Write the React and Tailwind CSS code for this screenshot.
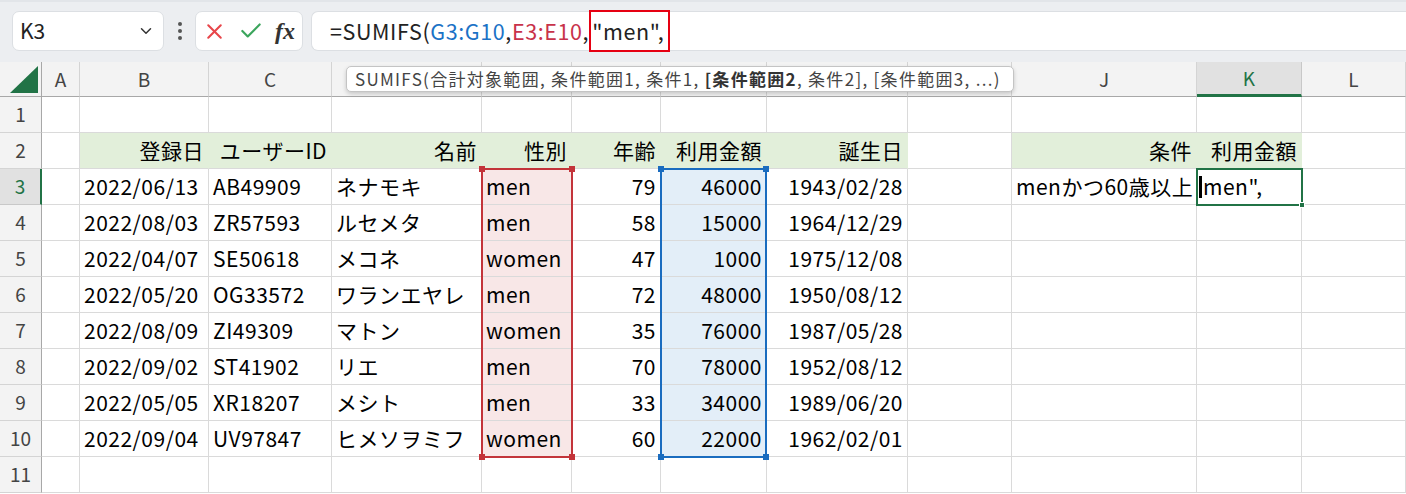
import { X, Check, ChevronDown } from "lucide-react";

const FONT = { fontFamily: '"Noto Sans CJK JP", "Noto Sans", sans-serif' };

const colLetters = ["A", "B", "C", "D", "E", "F", "G", "H", "I", "J", "K", "L"];

const data = [
    ["2022/06/13", "AB49909", "ネナモキ", "men", "79", "46000", "1943/02/28"],
    ["2022/08/03", "ZR57593", "ルセメタ", "men", "58", "15000", "1964/12/29"],
    ["2022/04/07", "SE50618", "メコネ", "women", "47", "1000", "1975/12/08"],
    ["2022/05/20", "OG33572", "ワランエヤレ", "men", "72", "48000", "1950/08/12"],
    ["2022/08/09", "ZI49309", "マトン", "women", "35", "76000", "1987/05/28"],
    ["2022/09/02", "ST41902", "リエ", "men", "70", "78000", "1952/08/12"],
    ["2022/05/05", "XR18207", "メシト", "men", "33", "34000", "1989/06/20"],
    ["2022/09/04", "UV97847", "ヒメソヲミフ", "women", "60", "22000", "1962/02/01"],
];

const headers = ["登録日", "ユーザーID", "名前", "性別", "年齢", "利用金額", "誕生日"];

// alignment of the data columns B..H
const dataAlign = ["left", "left", "left", "left", "right", "right", "right"];

function Cell({ text, align = "left", fill, children }) {
    let bg = "bg-white border-r-[#dadada]";
    if (fill === "green") bg = "bg-[#e2efda] border-r-[#e2efda]";
    if (fill === "red") bg = "bg-[#f8e7e7] border-r-[#dadada]";
    if (fill === "blue") bg = "bg-[#e3eef8] border-r-[#dadada]";
    return (
        <div
            className={`flex items-center border-r border-b border-b-[#dadada] text-[21px] tracking-[0.5px] text-black whitespace-nowrap overflow-visible ${bg} ${
                align === "right" ? "justify-end pr-[4px]" : "justify-start pl-[4px]"
            }`}
        >
            {children ?? text}
        </div>
    );
}

function RowHeader({ n, active }) {
    return (
        <div
            className={`flex items-center justify-center border-b text-[19px] ${
                active
                    ? "bg-[#e1e1e1] text-[#217346] border-r-2 border-r-[#217346] border-b-[#c8c8c8]"
                    : "bg-[#f3f3f3] text-[#444] border-r border-r-[#a8a8a8] border-b-[#d4d4d4]"
            }`}
        >
            {n}
        </div>
    );
}

function ColHeader({ l, active }) {
    return (
        <div
            className={`flex items-center justify-center border-r text-[19px] ${
                active
                    ? "bg-[#e1e1e1] text-[#217346] border-b-[3px] border-b-[#217346] border-r-[#c8c8c8]"
                    : "bg-[#f3f3f3] text-[#444] border-b border-b-[#a8a8a8] border-r-[#d4d4d4]"
            }`}
        >
            {l}
        </div>
    );
}

function Toolbar() {
    return (
        <div className="h-[62px] bg-[#eceef1] border-t-2 border-t-[#e2e5e9] flex items-start pt-[9px] pl-[12px] gap-0">
            <div className="w-[152px] h-[40px] bg-white rounded-[7px] border border-[#dcdfe3] flex items-center justify-between pl-[7px] pr-[8px]">
                <span className="text-[21px] text-[#222]" style={FONT}>K3</span>
                <ChevronDown size={18} strokeWidth={2} className="text-[#333]" />
            </div>
            <div className="w-[31px] h-[40px] flex flex-col items-center justify-center gap-[3px]">
                <div className="w-[4px] h-[4px] rounded-full bg-[#555]" />
                <div className="w-[4px] h-[4px] rounded-full bg-[#555]" />
                <div className="w-[4px] h-[4px] rounded-full bg-[#555]" />
            </div>
            <div className="w-[108px] h-[40px] bg-white rounded-[7px] border border-[#dcdfe3] flex items-center pl-[6px] gap-[11px]">
                <X size={25} strokeWidth={2} className="text-[#e8464a]" />
                <Check size={26} strokeWidth={2} className="text-[#3ba55c]" />
                <span className="text-[24px] font-bold italic text-[#333] leading-none" style={{ fontFamily: '"Liberation Serif", "DejaVu Serif", serif' }}>
                    fx
                </span>
            </div>
            <div className="ml-[8px] flex-1 h-[40px] bg-white rounded-l-[7px] border border-r-0 border-[#dcdfe3] flex items-center pl-[18px] text-[21.5px] tracking-[0.6px] text-[#222]" style={FONT}>
                <span>=SUMIFS(</span>
                <span className="text-[#1b72c6]">G3:G10</span>
                <span>,</span>
                <span className="text-[#c8324a]">E3:E10</span>
                <span>,</span>
                <span className="h-[42px] border-2 border-[#e60012] flex items-center pl-[1px] pr-[4px]">"men",</span>
            </div>
        </div>
    );
}

function Sheet() {
    const rows = [];
    for (let r = 1; r <= 11; r++) {
        const cells = [];
        for (let c = 0; c < 12; c++) {
            const key = `${r}-${c}`;
            let text = "";
            let align = "left";
            let fill;
            if (r === 2) {
                if (c >= 1 && c <= 7) {
                    text = headers[c - 1];
                    align = "right";
                    fill = "green";
                }
                if (c === 9) { text = "条件"; align = "right"; fill = "green"; }
                if (c === 10) { text = "利用金額"; align = "right"; fill = "green"; }
            } else if (r >= 3 && r <= 10) {
                if (c >= 1 && c <= 7) {
                    text = data[r - 3][c - 1];
                    align = dataAlign[c - 1];
                }
                if (c === 4) fill = "red";
                if (c === 6) fill = "blue";
                if (r === 3 && c === 9) text = "menかつ60歳以上";
            }
            if (r === 3 && c === 10) {
                cells.push(
                    <Cell key={key}>
                        <span className="flex items-center">
                            <span className="w-[3px] h-[22px] bg-black mr-[1px] -ml-[2px]" />
                            men",
                        </span>
                    </Cell>
                );
                continue;
            }
            cells.push(<Cell key={key} text={text} align={align} fill={fill} />);
        }
        rows.push(
            <div key={r} className="contents">
                <RowHeader n={r} active={r === 3} />
                {cells}
            </div>
        );
    }

    return (
        <div className="relative" style={FONT}>
            <div className="grid grid-cols-[42px_38px_129px_123px_150px_90px_89px_106px_141px_104px_185px_105px_104px] grid-rows-[35px_repeat(11,36px)]">
                <div className="bg-[#f3f3f3] border-r border-b border-[#a8a8a8] flex items-end justify-end pr-[3px] pb-[3px]">
                    <svg width="28" height="27" viewBox="0 0 28 27">
                        <polygon points="28,0 28,27 0,27" fill="#217346" />
                    </svg>
                </div>
                {colLetters.map((l) => (
                    <ColHeader key={l} l={l} active={l === "K"} />
                ))}
                {rows}
            </div>

            {/* formula tooltip */}
            <div className="absolute left-[346px] top-[4px] w-[668px] h-[26px] bg-white border border-[#c4c4c4] rounded-[5px] shadow-[0_2px_4px_rgba(0,0,0,0.18)] flex items-center pl-[8px] text-[17px] tracking-[1.3px] text-[#444] whitespace-nowrap overflow-hidden">
                <span>
                    SUMIFS(合計対象範囲, 条件範囲1, 条件1, <b className="font-bold text-[#333]">[条件範囲2</b>, 条件2], [条件範囲3, ...)
                </span>
            </div>

            {/* E3:E10 range */}
            <div className="absolute left-[481px] top-[106px] w-[92px] h-[290px] border-2 border-[#c3343a]">
                <div className="absolute -left-[4px] -top-[4px] w-[6px] h-[6px] bg-[#c3343a]" />
                <div className="absolute -right-[4px] -top-[4px] w-[6px] h-[6px] bg-[#c3343a]" />
                <div className="absolute -left-[4px] -bottom-[4px] w-[6px] h-[6px] bg-[#c3343a]" />
                <div className="absolute -right-[4px] -bottom-[4px] w-[6px] h-[6px] bg-[#c3343a]" />
            </div>

            {/* G3:G10 range */}
            <div className="absolute left-[660px] top-[106px] w-[107px] h-[290px] border-2 border-[#1a6cbf]">
                <div className="absolute -left-[4px] -top-[4px] w-[6px] h-[6px] bg-[#1a6cbf]" />
                <div className="absolute -right-[4px] -top-[4px] w-[6px] h-[6px] bg-[#1a6cbf]" />
                <div className="absolute -left-[4px] -bottom-[4px] w-[6px] h-[6px] bg-[#1a6cbf]" />
                <div className="absolute -right-[4px] -bottom-[4px] w-[6px] h-[6px] bg-[#1a6cbf]" />
            </div>

            {/* active cell K3 */}
            <div className="absolute left-[1196px] top-[106px] w-[107px] h-[38px] border-2 border-[#217346]">
                <div className="absolute -right-[4px] -bottom-[4px] w-[6px] h-[6px] bg-[#217346] border border-white" />
            </div>
        </div>
    );
}

export default function App() {
    return (
        <div className="w-[1406px] h-[494px] overflow-hidden bg-white">
            <Toolbar />
            <Sheet />
        </div>
    );
}
